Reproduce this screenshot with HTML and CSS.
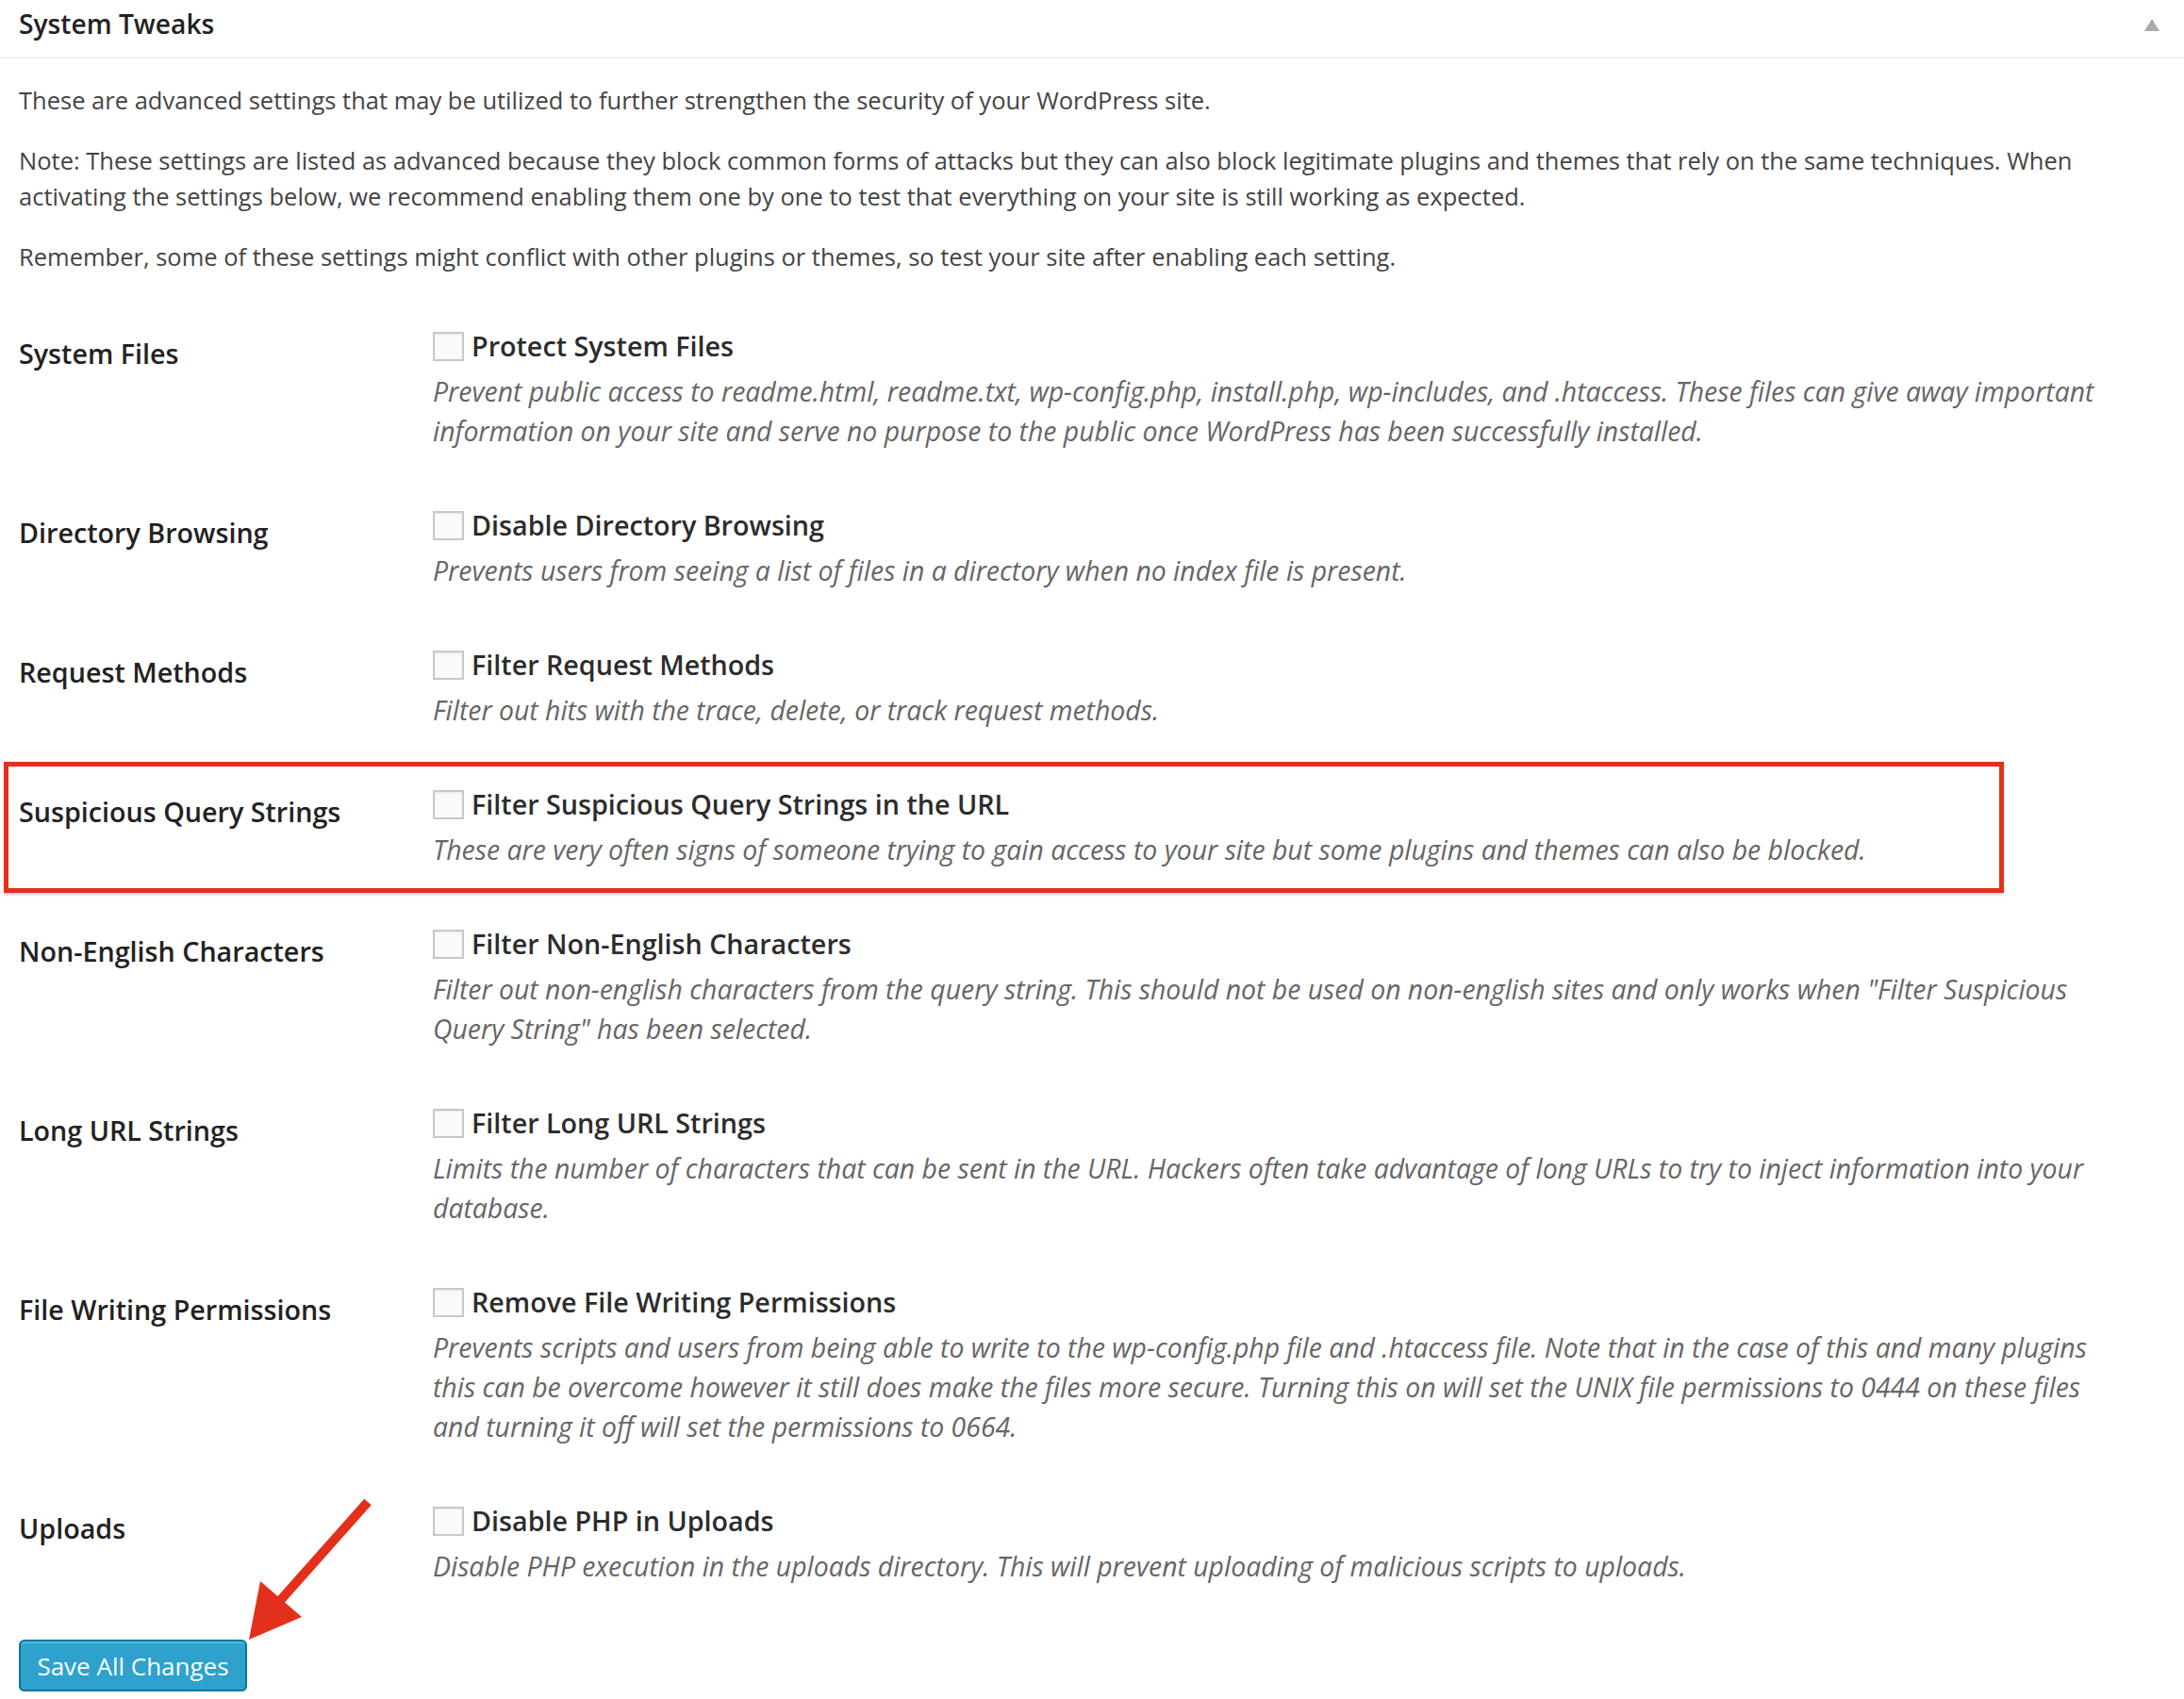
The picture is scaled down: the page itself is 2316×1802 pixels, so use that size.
FILE: index.html
```html
<!DOCTYPE html>
<html lang="en">
<head>
    <meta charset="UTF-8">
    <meta name="viewport" content="width=device-width, initial-scale=1.0">
    <title>System Tweaks</title>
    <link rel="stylesheet" href="styles.css">
</head>
<body>
<div class="postbox">
    <div class="postbox-header">
        <h3>System Tweaks</h3>
        <span class="toggle"></span>
    </div>
    <div class="inside">
        <p>These are advanced settings that may be utilized to further strengthen the security of your WordPress site.</p>
        <p>Note: These settings are listed as advanced because they block common forms of attacks but they can also block legitimate plugins and themes that rely on the same techniques. When activating the settings below, we recommend enabling them one by one to test that everything on your site is still working as expected.</p>
        <p>Remember, some of these settings might conflict with other plugins or themes, so test your site after enabling each setting.</p>

        <div class="settings">
            <div class="setting">
                <div class="setting-label">System Files</div>
                <div class="setting-field">
                    <label class="check"><input type="checkbox">Protect System Files</label>
                    <p class="description">Prevent public access to readme.html, readme.txt, wp-config.php, install.php, wp-includes, and .htaccess. These files can give away important information on your site and serve no purpose to the public once WordPress has been successfully installed.</p>
                </div>
            </div>
            <div class="setting">
                <div class="setting-label">Directory Browsing</div>
                <div class="setting-field">
                    <label class="check"><input type="checkbox">Disable Directory Browsing</label>
                    <p class="description">Prevents users from seeing a list of files in a directory when no index file is present.</p>
                </div>
            </div>
            <div class="setting">
                <div class="setting-label">Request Methods</div>
                <div class="setting-field">
                    <label class="check"><input type="checkbox">Filter Request Methods</label>
                    <p class="description">Filter out hits with the trace, delete, or track request methods.</p>
                </div>
            </div>
            <div class="setting highlight">
                <div class="setting-label">Suspicious Query Strings</div>
                <div class="setting-field">
                    <label class="check"><input type="checkbox">Filter Suspicious Query Strings in the URL</label>
                    <p class="description">These are very often signs of someone trying to gain access to your site but some plugins and themes can also be blocked.</p>
                </div>
            </div>
            <div class="setting">
                <div class="setting-label">Non-English Characters</div>
                <div class="setting-field">
                    <label class="check"><input type="checkbox">Filter Non-English Characters</label>
                    <p class="description">Filter out non-english characters from the query string. This should not be used on non-english sites and only works when "Filter Suspicious Query String" has been selected.</p>
                </div>
            </div>
            <div class="setting">
                <div class="setting-label">Long URL Strings</div>
                <div class="setting-field">
                    <label class="check"><input type="checkbox">Filter Long URL Strings</label>
                    <p class="description">Limits the number of characters that can be sent in the URL. Hackers often take advantage of long URLs to try to inject information into your database.</p>
                </div>
            </div>
            <div class="setting">
                <div class="setting-label">File Writing Permissions</div>
                <div class="setting-field">
                    <label class="check"><input type="checkbox">Remove File Writing Permissions</label>
                    <p class="description">Prevents scripts and users from being able to write to the wp-config.php file and .htaccess file. Note that in the case of this and many plugins this can be overcome however it still does make the files more secure. Turning this on will set the UNIX file permissions to 0444 on these files and turning it off will set the permissions to 0664.</p>
                </div>
            </div>
            <div class="setting">
                <div class="setting-label">Uploads</div>
                <div class="setting-field">
                    <label class="check"><input type="checkbox">Disable PHP in Uploads</label>
                    <p class="description">Disable PHP execution in the uploads directory. This will prevent uploading of malicious scripts to uploads.</p>
                </div>
            </div>
        </div>

        <div class="submit">
            <svg class="arrow" width="150" height="160" viewBox="0 0 150 160">
                <line x1="140" y1="4" x2="44" y2="112" stroke="#e2301c" stroke-width="10"/>
                <polygon points="14,150 26,88 70,126" fill="#e2301c"/>
            </svg>
            <button type="button" class="button-primary">Save All Changes</button>
        </div>
    </div>
</div>
</body>
</html>
```

FILE: styles.css
```css
* {
    margin: 0;
    padding: 0;
    box-sizing: border-box;
}
body {
    background: #fff;
    color: #444;
    font-family: 'Open Sans', sans-serif;
    font-size: 25.5px;
}
.postbox-header {
    height: 62px;
    padding: 0 20px;
    border-bottom: 2px solid #eeeeee;
    display: flex;
    justify-content: space-between;
}
.postbox-header h3 {
    font-size: 28.2px;
    font-weight: 600;
    line-height: 50px;
    color: #222;
}
.toggle {
    margin-top: 20px;
    width: 0;
    height: 0;
    border-left: 8px solid transparent;
    border-right: 8px solid transparent;
    border-bottom: 13px solid #aaa;
    margin-right: 6px;
}
.inside {
    padding: 25px 20px 0;
}
.inside > p {
    line-height: 38px;
    margin-bottom: 26px;
}
.setting {
    display: grid;
    grid-template-columns: 439px 1fr;
    padding: 29px 0;
}
.setting-label {
    font-size: 28.7px;
    font-weight: 600;
    color: #222;
    line-height: 40px;
    padding-top: 9px;
}
.setting-field {
    padding-right: 50px;
}
.check {
    display: flex;
    align-items: center;
    height: 40px;
    margin-bottom: 8px;
    font-size: 28.7px;
    font-weight: 600;
    color: #2c2c2c;
}
.check input {
    appearance: none;
    -webkit-appearance: none;
    flex: none;
    width: 33px;
    height: 31px;
    margin: 2px 8px 0 0;
    border: 2px solid #c8c8c8;
    background: #fafafa;
    box-shadow: inset 0 1px 2px rgba(0, 0, 0, 0.08);
}
.description {
    font-size: 28.4px;
    font-style: italic;
    color: #666;
    line-height: 42px;
}
.highlight {
    position: relative;
}
.highlight::before {
    content: "";
    position: absolute;
    left: -16px;
    right: 171px;
    top: 5px;
    bottom: 4px;
    border: 5px solid #e2301c;
    box-shadow: 0 2px 3px rgba(0, 0, 0, 0.2);
}
.submit {
    position: relative;
    margin-top: 28px;
}
.arrow {
    position: absolute;
    left: 230px;
    top: -150px;
}
.button-primary {
    display: block;
    width: 242px;
    height: 55px;
    background: #2ea2cc;
    border: 2px solid #0074a2;
    border-radius: 6px;
    color: #fff;
    font-family: 'Open Sans', sans-serif;
    font-size: 26px;
    box-shadow: inset 0 2px 0 rgba(120, 200, 230, 0.5), 0 2px 0 rgba(0, 0, 0, 0.15);
}
```
